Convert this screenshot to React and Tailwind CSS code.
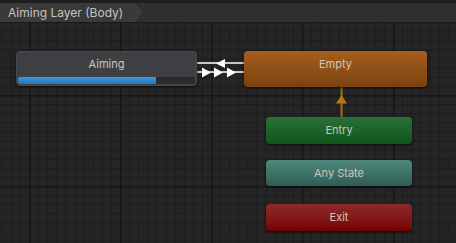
import React from 'react'

const font = { fontFamily: "Inter, 'Noto Sans', sans-serif" }

function Grid() {
  const small = Array.from({ length: 10 }, (_, i) => i * 9.1)
  return (
    <svg className="absolute inset-0" width="456" height="220">
      <defs>
        <pattern id="grid" x="29" y="72" width="91" height="91" patternUnits="userSpaceOnUse">
          {small.map((p) => (
            <g key={p}>
              <line x1={p + 0.5} y1="0" x2={p + 0.5} y2="91" stroke="#1c1c1c" strokeWidth="1" />
              <line x1="0" y1={p + 0.5} x2="91" y2={p + 0.5} stroke="#1c1c1c" strokeWidth="1" />
            </g>
          ))}
          <line x1="0.75" y1="0" x2="0.75" y2="91" stroke="#161616" strokeWidth="1.5" />
          <line x1="0" y1="0.75" x2="91" y2="0.75" stroke="#161616" strokeWidth="1.5" />
        </pattern>
      </defs>
      <rect width="456" height="220" fill="#252525" />
      <rect width="456" height="220" fill="url(#grid)" />
    </svg>
  )
}

function Transitions() {
  return (
    <svg className="absolute inset-0 pointer-events-none" width="456" height="220">
      {/* Aiming <-> Empty */}
      <line x1="196" y1="40" x2="245" y2="40" stroke="#c9c9c9" strokeWidth="2" />
      <line x1="196" y1="49" x2="245" y2="49" stroke="#c9c9c9" strokeWidth="2" />
      <polygon points="216,40.5 225,36 225,45" fill="#ffffff" />
      <polygon points="211,49.5 202,44.5 202,54.5" fill="#ffffff" />
      <polygon points="223,49.5 214,44.5 214,54.5" fill="#ffffff" />
      <polygon points="236,49.5 227,44.5 227,54.5" fill="#ffffff" />
      {/* Entry -> Empty */}
      <line x1="341.5" y1="64" x2="341.5" y2="94" stroke="#a86c10" strokeWidth="2" />
      <polygon points="341.5,72 336,80.5 347,80.5" fill="#b57812" />
    </svg>
  )
}

function StateNode({ label, className, top, left, w, h, children }) {
  return (
    <div
      className={`absolute rounded-[4px] flex flex-col shadow-[0_1px_3px_rgba(0,0,0,0.7)] ${className}`}
      style={{ top, left, width: w, height: h }}
    >
      <div className="flex-1 flex items-center justify-center text-[11px] text-[#cdc6bd]" style={font}>
        {label}
      </div>
      {children}
    </div>
  )
}

export default function App() {
  return (
    <div className="w-[456px] h-[243px] overflow-hidden flex flex-col bg-[#262626]">
      {/* Header */}
      <div className="h-[3px] bg-[#1e1e1e]" />
      <div className="h-[19px] flex bg-[#303030]">
        <div className="relative flex items-center pl-[8px] pr-[12px] w-[137px] bg-[#3a3a3a]">
          <span className="text-[12px] text-[#c4c4c4] whitespace-nowrap" style={font}>
            Aiming Layer (Body)
          </span>
          <svg className="absolute right-[-8px] top-0" width="9" height="19">
            <polygon points="0,0 8,9.5 0,19" fill="#3a3a3a" />
            <polyline points="0,0 8,9.5 0,19" fill="none" stroke="#262626" strokeWidth="1" />
          </svg>
        </div>
      </div>
      <div className="h-[1px] bg-[#1a1a1a]" />

      {/* Canvas */}
      <div className="relative flex-1">
        <Grid />
        <Transitions />

        <StateNode label="Aiming" className="bg-[#3e3f42] border border-[#4a4b4e]" top={28} left={16} w={181} h={35}>
          <div className="h-[7px] mx-[1px] mb-[1px] rounded-[2px] bg-[#2a2b2d] overflow-hidden">
            <div className="h-full bg-gradient-to-b from-[#3e99dc] to-[#2277be]" style={{ width: '78%' }} />
          </div>
        </StateNode>

        <StateNode
          label="Empty"
          className="bg-gradient-to-b from-[#a65f1f] to-[#7a420f] pb-[9px]"
          top={28}
          left={244}
          w={183}
          h={36}
        />
        <StateNode
          label="Entry"
          className="bg-gradient-to-b from-[#2b7035] to-[#0d561d]"
          top={94}
          left={266}
          w={146}
          h={27}
        />
        <StateNode
          label="Any State"
          className="bg-gradient-to-b from-[#4f8a7d] to-[#2f5d53]"
          top={137}
          left={266}
          w={146}
          h={26}
        />
        <StateNode
          label="Exit"
          className="bg-gradient-to-b from-[#8c2a2a] to-[#770000]"
          top={181}
          left={266}
          w={146}
          h={27}
        />
      </div>
    </div>
  )
}
